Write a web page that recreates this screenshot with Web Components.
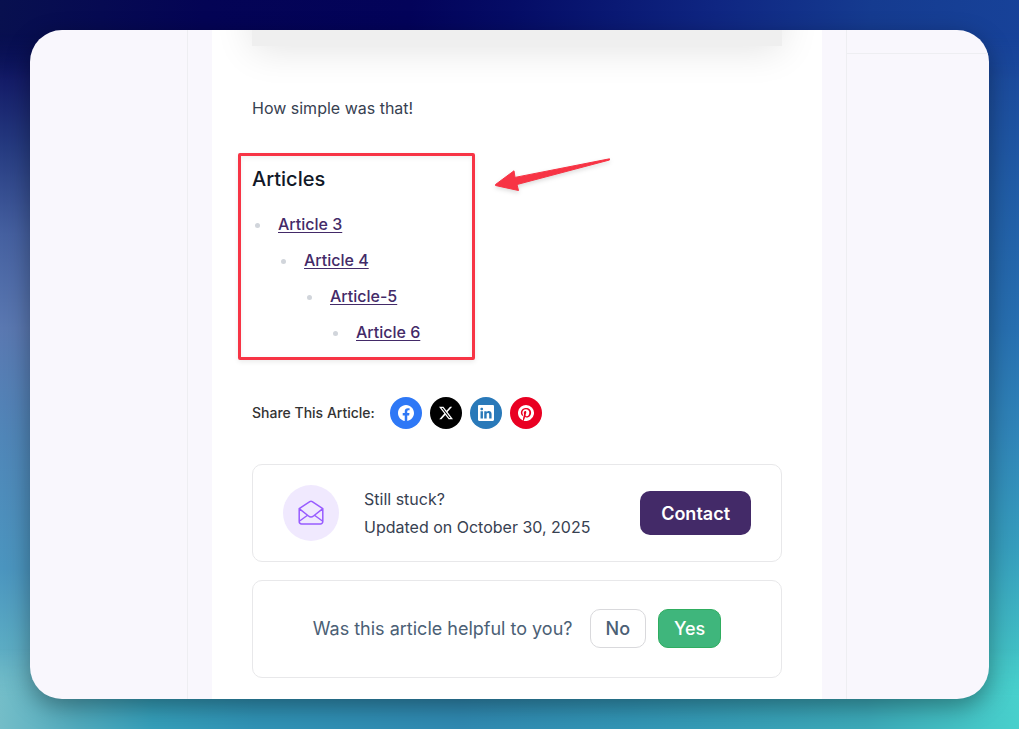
<!DOCTYPE html>
<html lang="en">
<head>
<meta charset="utf-8">
<meta name="viewport" content="width=device-width, initial-scale=1">
<title>Documentation article</title>
<style>
  body { margin: 0; font-family: Inter, "Liberation Sans", sans-serif; font-size: 16px; color: #374151; }
</style>
</head>
<body>
<doc-backdrop>
  <doc-page>
    <article-text>How simple was that!</article-text>
    <article-tree></article-tree>
    <share-links></share-links>
    <contact-card></contact-card>
    <feedback-card></feedback-card>
  </doc-page>
</doc-backdrop>
<script>
const define = (name, html) => customElements.define(name, class extends HTMLElement {
  constructor() {
    super();
    this.attachShadow({ mode: 'open' }).innerHTML = `<style>*{box-sizing:border-box}:host{display:block;box-sizing:border-box}</style>` + html;
  }
});

define('doc-backdrop', `
<style>
  :host {
    position: relative; isolation: isolate; min-height: 100vh; padding: 30px; display: flex;
    background:
      linear-gradient(180deg, #08104f 0%, #070d55 4%, #141c68 11%, #253a80 20%, #4560a0 32%, #5a78b1 45%, #5086b8 60%, #4b95bf 78%, #5aaac3 88%, #74bdc8 100%) left / 50% 100% no-repeat,
      linear-gradient(180deg, #174299 0%, #1b4a9c 10%, #205ba5 25%, #276fb0 45%, #3085b8 60%, #369dbd 75%, #42c0c5 90%, #48d0cc 100%) right / 50% 100% no-repeat;
  }
  :host::before, :host::after { content: ""; position: absolute; left: 0; right: 0; height: 80px; z-index: -1; }
  :host::before {
    top: 0;
    background: linear-gradient(95deg, #08104f 0%, #040455 20%, #03035a 40%, #050c66 50%, #0f2682 70%, #153b90 85%, #174299 100%);
    mask: linear-gradient(180deg, #000 40%, #0000 100%);
  }
  :host::after {
    bottom: 0;
    background: linear-gradient(90deg, #74bdc8 0%, #4faabd 8%, #359fba 15%, #3093b6 25%, #308ab2 45%, #3296b6 62%, #3caab9 85%, #48d0cc 100%);
    mask: linear-gradient(0deg, #000 40%, #0000 100%);
  }
</style>
<slot></slot>`);

define('doc-page', `
<style>
  :host {
    flex: 1; min-width: 0; display: grid; grid-template-columns: 157fr 660fr 142fr;
    overflow: hidden; border-radius: 32px; background: #f9f7fd;
    box-shadow: 0 8px 24px rgba(0, 0, 0, .36);
  }
  main { padding: 0 24px; border: 1px solid #eeeef2; border-width: 0 1px; }
  .paper { min-height: 100%; padding: 0 40px 21px; background: #fff; overflow: hidden; }
  .media { height: 216px; margin-top: -200px; background: #efefef; box-shadow: 0 4px 36px rgba(0, 0, 0, .11); }
  .side { height: 24px; border-bottom: 1px solid #eeeef2; }
</style>
<aside></aside>
<main><div class="paper"><div class="media"></div><slot></slot></div></main>
<aside><div class="side"></div></aside>`);

define('article-text', `
<style>
  p { margin: 48px 0 31px; line-height: 28px; }
</style>
<p><slot></slot></p>`);

define('article-tree', `
<style>
  :host { position: relative; }
  section {
    width: 237px; margin-left: -14px; padding: 10px 11px 7px; border: 3px solid #f73445; border-radius: 2px;
    box-shadow: 0 2px 5px rgba(0, 0, 0, .08), inset 0 2px 5px rgba(0, 0, 0, .06);
  }
  h2 { margin: 0 0 14px; font-size: 20px; font-weight: 500; line-height: 26px; color: #111827; }
  ul { margin: 0; padding: 0 0 0 26px; list-style: none; }
  li { line-height: 36px; }
  li::before { content: ""; float: left; width: 5px; height: 5px; margin: 17px 0 0 -23px; border-radius: 50%; background: #d1d5db; }
  a { font-weight: 500; color: #432a68; text-underline-offset: 2px; }
  svg { position: absolute; left: 240px; top: 0; overflow: visible; filter: drop-shadow(0 2px 2px rgba(0, 0, 0, .14)); }
</style>
<section>
  <h2>Articles</h2>
  <ul><li><a href="#article-3">Article 3</a>
    <ul><li><a href="#article-4">Article 4</a>
      <ul><li><a href="#article-5">Article-5</a>
        <ul><li><a href="#article-6">Article 6</a></li></ul>
      </li></ul>
    </li></ul>
  </li></ul>
</section>
<svg width="120" height="44" viewBox="0 0 120 44" aria-hidden="true"><path d="M3.5 31.5 22 17.8l1 6.6L117.5 5.8V7L25 31.5l1.5 6L3.5 32.5Z" fill="#f73445" stroke="#f73445" stroke-linejoin="round"/></svg>`);

define('share-links', `
<style>
  :host { display: flex; align-items: center; margin-top: 37px; }
  span { margin-right: 15px; font-size: 14px; font-weight: 500; line-height: 20px; color: #333; }
  nav { display: flex; gap: 8px; }
  a { display: grid; place-items: center; width: 32px; height: 32px; border-radius: 50%; color: #fff; }
  svg { width: 16px; height: 16px; fill: currentColor; }
  .facebook { background: #2e78f6; } .x { background: #000; } .linkedin { background: #2979b9; } .pinterest { background: #e90022; }
  .x svg { width: 14px; height: 14px; }
</style>
<span id="share">Share This Article:</span>
<nav aria-labelledby="share">
  <a class="facebook" href="#facebook" aria-label="Facebook"><svg viewBox="0 0 16 16"><path d="M16 8.049c0-4.446-3.582-8.05-8-8.05C3.58 0-.002 3.603-.002 8.05c0 4.017 2.926 7.347 6.75 7.951v-5.625H4.718V8.05H6.75V6.275c0-2.017 1.195-3.131 3.022-3.131.876 0 1.791.157 1.791.157v1.98h-1.009c-.993 0-1.303.621-1.303 1.258v1.51h2.218l-.354 2.326H9.25V16c3.824-.604 6.75-3.934 6.75-7.951"/></svg></a>
  <a class="x" href="#x" aria-label="X"><svg viewBox="0 0 16 16"><path d="M12.6.75h2.454l-5.36 6.142L16 15.25h-4.937l-3.867-5.07-4.425 5.07H.316l5.733-6.57L0 .75h5.063l3.495 4.633L12.601.75Zm-.86 13.028h1.36L4.323 2.145H2.865z"/></svg></a>
  <a class="linkedin" href="#linkedin" aria-label="LinkedIn"><svg viewBox="0 0 16 16"><path d="M0 1.146C0 .513.526 0 1.175 0h13.65C15.474 0 16 .513 16 1.146v13.708c0 .633-.526 1.146-1.175 1.146H1.175C.526 16 0 15.487 0 14.854zm4.943 12.248V6.169H2.542v7.225zm-1.2-8.212c.837 0 1.358-.554 1.358-1.248-.015-.709-.52-1.248-1.342-1.248S2.4 3.226 2.4 3.934c0 .694.521 1.248 1.327 1.248zm4.908 8.212V9.359c0-.216.016-.432.08-.586.173-.431.568-.878 1.232-.878.869 0 1.216.662 1.216 1.634v3.865h2.401V9.25c0-2.22-1.184-3.252-2.764-3.252-1.274 0-1.845.7-2.165 1.193v.025h-.016l.016-.025V6.169h-2.4c.03.678 0 7.225 0 7.225z"/></svg></a>
  <a class="pinterest" href="#pinterest" aria-label="Pinterest"><svg viewBox="0 0 16 16"><path d="M8 0a8 8 0 0 0-2.915 15.452c-.07-.633-.134-1.606.027-2.297.146-.625.938-3.977.938-3.977s-.239-.479-.239-1.187c0-1.113.645-1.943 1.448-1.943.682 0 1.012.512 1.012 1.127 0 .686-.437 1.712-.663 2.663-.188.796.4 1.446 1.185 1.446 1.422 0 2.515-1.5 2.515-3.664 0-1.915-1.377-3.254-3.342-3.254-2.276 0-3.612 1.707-3.612 3.471 0 .688.265 1.425.595 1.826a.24.24 0 0 1 .056.23c-.061.252-.196.796-.222.907-.035.146-.116.177-.268.107-1-.465-1.624-1.926-1.624-3.1 0-2.523 1.834-4.84 5.286-4.84 2.775 0 4.932 1.977 4.932 4.62 0 2.757-1.739 4.976-4.151 4.976-.811 0-1.573-.421-1.834-.919l-.498 1.902c-.181.695-.669 1.566-.995 2.097A8 8 0 1 0 8 0"/></svg></a>
</nav>`);

define('contact-card', `
<style>
  :host { display: flex; align-items: center; gap: 25px; margin-top: 35px; padding: 20px 30px; border: 1px solid #e8e8ea; border-radius: 10px; }
  .icon { display: grid; place-items: center; flex: none; width: 56px; height: 56px; border-radius: 50%; background: #f0e9fe; }
  .text { flex: 1; line-height: 28px; }
  p { margin: 0; }
  button { height: 44px; padding: 0 21px; border: 0; border-radius: 10px; background: #432a68; color: #fff; font: 600 18px Inter, "Liberation Sans", sans-serif; }
</style>
<div class="icon"><svg width="28" height="28" viewBox="0 0 28 28" fill="none" stroke="#985cff" stroke-width="1.5" stroke-linecap="round" stroke-linejoin="round" aria-hidden="true"><path d="M2.2 9.6v13A2.4 2.4 0 0 0 4.6 25h18.8a2.4 2.4 0 0 0 2.4-2.4v-13l-10.6-7a2.3 2.3 0 0 0-2.4 0L2.2 9.6l9.3 7.4a4 4 0 0 0 5 0l9.3-7.4M2.6 22l7.6-5.5M25.4 22l-7.6-5.5"/></svg></div>
<div class="text"><p>Still stuck?</p><p>Updated on October 30, 2025</p></div>
<button type="button">Contact</button>`);

define('feedback-card', `
<style>
  :host { display: flex; align-items: flex-start; justify-content: center; margin-top: 18px; padding: 28px 20px; border: 1px solid #e8e8ea; border-radius: 10px; color: #4b6075; font-size: 18px; line-height: 40px; }
  p { margin: 0 17px 0 0; }
  button { height: 39px; padding: 0 15px; border: 1px solid #d9d9dc; border-radius: 10px; background: #fff; color: #4b6075; font: 500 18px Inter, "Liberation Sans", sans-serif; }
  .yes { margin-left: 12px; border-color: #2fad60; background: #3fb67c; color: #fff; }
</style>
<p>Was this article helpful to you?</p>
<button type="button">No</button><button class="yes" type="button">Yes</button>`);
</script>
</body>
</html>
